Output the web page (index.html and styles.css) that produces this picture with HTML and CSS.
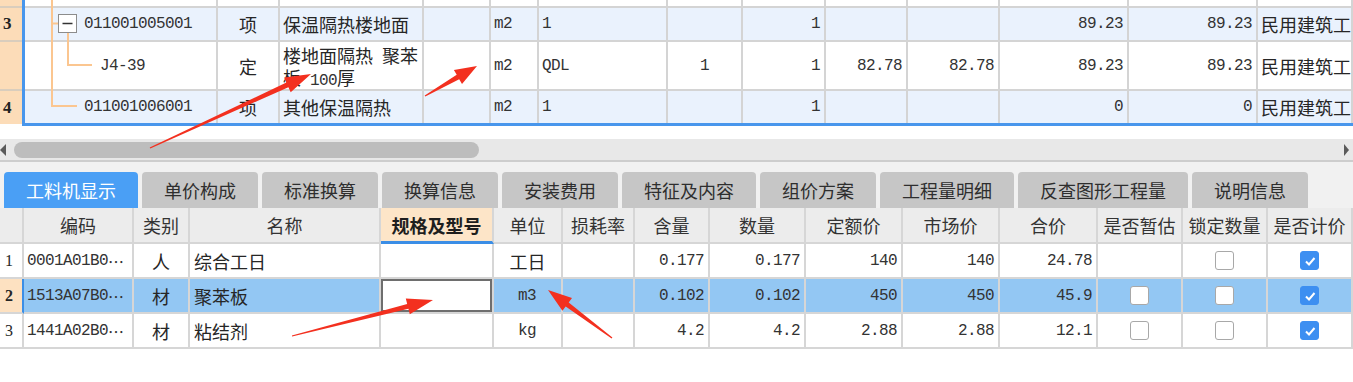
FILE: index.html
```html
<!DOCTYPE html>
<html lang="zh-CN">
  <head>
    <meta charset="UTF-8" />
    <title>工料机显示</title>
    <link rel="stylesheet" href="styles.css">
  </head>

  <body>
    <div class="page">
      <!-- upper grid: bill items -->
      <div class="top">
        <div class="rowheads">
          <div class="rh rh-cut"></div>
          <div class="rh rh-qd">3</div>
          <div class="rh rh-de"></div>
          <div class="rh rh-last">4</div>
        </div>
        <div class="frame">
          <div class="trow cut">
            <div class="cell"></div><div class="cell"></div><div class="cell"></div><div class="cell"></div>
            <div class="cell"></div><div class="cell"></div><div class="cell"></div><div class="cell"></div>
            <div class="cell"></div><div class="cell"></div><div class="cell"></div><div class="cell"></div>
            <div class="cell"></div>
          </div>
          <div class="trow qd">
            <div class="cell code m">011001005001</div>
            <div class="cell c">项</div>
            <div class="cell">保温隔热楼地面</div>
            <div class="cell"></div>
            <div class="cell m">m2</div>
            <div class="cell m">1</div>
            <div class="cell"></div>
            <div class="cell r m">1</div>
            <div class="cell"></div>
            <div class="cell"></div>
            <div class="cell r m">89.23</div>
            <div class="cell r m">89.23</div>
            <div class="cell">民用建筑工程</div>
          </div>
          <div class="trow de">
            <div class="cell code sub m">J4-39</div>
            <div class="cell c">定</div>
            <div class="cell wrap">楼地面隔热&ensp;聚苯<br>板&ensp;<span class="m">100</span>厚</div>
            <div class="cell"></div>
            <div class="cell m">m2</div>
            <div class="cell m">QDL</div>
            <div class="cell c m">1</div>
            <div class="cell r m">1</div>
            <div class="cell r m">82.78</div>
            <div class="cell r m">82.78</div>
            <div class="cell r m">89.23</div>
            <div class="cell r m">89.23</div>
            <div class="cell">民用建筑工程</div>
          </div>
          <div class="trow qd last">
            <div class="cell code m">011001006001</div>
            <div class="cell c">项</div>
            <div class="cell">其他保温隔热</div>
            <div class="cell"></div>
            <div class="cell m">m2</div>
            <div class="cell m">1</div>
            <div class="cell"></div>
            <div class="cell r m">1</div>
            <div class="cell"></div>
            <div class="cell"></div>
            <div class="cell r m">0</div>
            <div class="cell r m">0</div>
            <div class="cell">民用建筑工程</div>
          </div>

          <!-- tree lines over the code column -->
          <svg class="tree" width="120" height="123" viewBox="0 0 120 123">
            <g stroke="#fbc690" stroke-width="2" fill="none">
              <line x1="27" y1="0" x2="27" y2="107" />
              <line x1="27" y1="23.5" x2="33" y2="23.5" />
              <line x1="43" y1="33" x2="43" y2="66" />
              <line x1="43" y1="65" x2="67" y2="65" />
              <line x1="26" y1="106" x2="52" y2="106" />
            </g>
            <rect x="33.5" y="14.5" width="18" height="18" fill="#fff" stroke="#8c8c8c" />
            <line x1="37.5" y1="23.5" x2="47.5" y2="23.5" stroke="#333" stroke-width="1.5" />
          </svg>
        </div>
      </div>

      <div class="hscroll">
        <span class="arr arr-l"></span>
        <span class="thumb"></span>
        <span class="arr arr-r"></span>
      </div>

      <div class="tabs">
        <div class="tab active">工料机显示</div>
        <div class="tab">单价构成</div>
        <div class="tab">标准换算</div>
        <div class="tab">换算信息</div>
        <div class="tab">安装费用</div>
        <div class="tab">特征及内容</div>
        <div class="tab">组价方案</div>
        <div class="tab">工程量明细</div>
        <div class="tab">反查图形工程量</div>
        <div class="tab">说明信息</div>
      </div>

      <!-- lower grid: labour / material / machine -->
      <div class="grid">
        <div class="brow head">
          <div class="bc"></div>
          <div class="bc c">编码</div>
          <div class="bc c">类别</div>
          <div class="bc c">名称</div>
          <div class="bc c spec">规格及型号</div>
          <div class="bc c">单位</div>
          <div class="bc c">损耗率</div>
          <div class="bc c">含量</div>
          <div class="bc c">数量</div>
          <div class="bc c">定额价</div>
          <div class="bc c">市场价</div>
          <div class="bc c">合价</div>
          <div class="bc c">是否暂估</div>
          <div class="bc c">锁定数量</div>
          <div class="bc c">是否计价</div>
        </div>
        <div class="brow">
          <div class="bc no">1</div>
          <div class="bc m">0001A01B0<span class="dots">⋯</span></div>
          <div class="bc c">人</div>
          <div class="bc">综合工日</div>
          <div class="bc"></div>
          <div class="bc c">工日</div>
          <div class="bc"></div>
          <div class="bc r m">0.177</div>
          <div class="bc r m">0.177</div>
          <div class="bc r m">140</div>
          <div class="bc r m">140</div>
          <div class="bc r m">24.78</div>
          <div class="bc c"></div>
          <div class="bc c"><span class="cb"></span></div>
          <div class="bc c"><span class="cb on"><svg viewBox="0 0 14 14"><path d="M3 7.5 L6 10.5 L11.5 4" /></svg></span></div>
        </div>
        <div class="brow sel">
          <div class="bc no">2</div>
          <div class="bc m">1513A07B0<span class="dots">⋯</span></div>
          <div class="bc c">材</div>
          <div class="bc">聚苯板</div>
          <div class="bc edit"></div>
          <div class="bc c m">m3</div>
          <div class="bc"></div>
          <div class="bc r m">0.102</div>
          <div class="bc r m">0.102</div>
          <div class="bc r m">450</div>
          <div class="bc r m">450</div>
          <div class="bc r m">45.9</div>
          <div class="bc c"><span class="cb"></span></div>
          <div class="bc c"><span class="cb"></span></div>
          <div class="bc c"><span class="cb on"><svg viewBox="0 0 14 14"><path d="M3 7.5 L6 10.5 L11.5 4" /></svg></span></div>
        </div>
        <div class="brow">
          <div class="bc no">3</div>
          <div class="bc m">1441A02B0<span class="dots">⋯</span></div>
          <div class="bc c">材</div>
          <div class="bc">粘结剂</div>
          <div class="bc"></div>
          <div class="bc c m">kg</div>
          <div class="bc"></div>
          <div class="bc r m">4.2</div>
          <div class="bc r m">4.2</div>
          <div class="bc r m">2.88</div>
          <div class="bc r m">2.88</div>
          <div class="bc r m">12.1</div>
          <div class="bc c"><span class="cb"></span></div>
          <div class="bc c"><span class="cb"></span></div>
          <div class="bc c"><span class="cb on"><svg viewBox="0 0 14 14"><path d="M3 7.5 L6 10.5 L11.5 4" /></svg></span></div>
        </div>
      </div>

      <!-- red annotation arrows on top of the screenshot -->
      <svg class="marks" width="1353" height="382" viewBox="0 0 1353 382">
        <polygon points="150.3,148.5 288.4,87.2 290.7,92.2 311,74 284.1,77.6 286.4,82.6 149.7,147.5" />
        <polygon points="425.3,96.5 459.2,79.2 462,83.9 477,66 453.9,70.1 456.7,74.8 424.7,95.5" />
        <polygon points="292.1,336.6 408.4,308.8 409.8,314.2 433,300 405.8,298.6 407.2,304 291.9,335.4" />
        <polygon points="612.4,337.5 568.7,302.4 572,298 548,290 562.4,310.8 565.7,306.4 611.6,338.5" />
      </svg>
    </div>
  </body>
</html>
```

FILE: styles.css
```css
* {
  box-sizing: border-box;
}

body {
  margin: 0;
  background: #fff;
  font-family: "Noto Sans CJK SC", sans-serif;
  font-size: 18px;
  color: #262626;
}

.page {
  position: relative;
  width: 1353px;
  height: 382px;
  overflow: hidden;
}

/* upper grid */
.top {
  display: flex;
  height: 126px;
}

.rowheads {
  width: 22px;
  flex: none;
}

.rh {
  display: flex;
  align-items: center;
  padding-left: 3px;
  background: #fcdcb8;
  border-bottom: 2px solid #d9cdbd;
  font-family: "Liberation Serif", serif;
  font-weight: bold;
  font-size: 17px;
  color: #222;
}

.rh-cut { height: 8px; }
.rh-qd { height: 34px; }
.rh-de { height: 49px; }
.rh-last { height: 33px; border-bottom: none; }

.frame {
  flex: 1;
  position: relative;
  overflow: hidden;
  border-left: 3px solid #4896ec;
  border-bottom: 3px solid #4896ec;
}

.trow {
  display: grid;
  grid-template-columns: 193px 62px 144px 67px 48px 129px 75px 83px 82px 92px 129px 129px 95px;
}

.trow.cut { height: 8px; }
.trow.qd { height: 34px; background: #eaf2fd; }
.trow.de { height: 49px; }
.trow.last { height: 32px; }
.trow.last .cell { border-bottom: none; }

.cell {
  display: flex;
  align-items: center;
  padding: 0 3px;
  overflow: hidden;
  white-space: nowrap;
  border-right: 2px solid #d4d4d4;
  border-bottom: 2px solid #d4d4d4;
  line-height: 1;
}

.cell.code { padding-left: 59px; }
.cell.sub { padding-left: 75px; }
.cell.wrap {
  display: block;
  white-space: normal;
  line-height: 22px;
  padding-top: 2px;
}

.c { justify-content: center; }
.r { justify-content: flex-end; padding-right: 4px; }

.m {
  font-family: "Liberation Mono", monospace;
  font-size: 16px;
  letter-spacing: -0.6px;
  color: #333;
}

.tree {
  position: absolute;
  left: 0;
  top: 0;
}

/* horizontal scroll bar */
.hscroll {
  display: flex;
  align-items: center;
  margin-top: 13px;
  height: 23px;
  background: #e8e8e8;
  border-bottom: 2px solid #cdcdcd;
}

.arr {
  width: 0;
  height: 0;
  border-top: 6px solid transparent;
  border-bottom: 6px solid transparent;
}

.arr-l {
  border-right: 6px solid #5a5a5a;
}

.arr-r {
  margin-left: auto;
  margin-right: 4px;
  border-left: 5px solid #5a5a5a;
}

.thumb {
  margin-left: 8px;
  width: 465px;
  height: 16px;
  border-radius: 8px;
  background: #bdbdbd;
}

/* tabs */
.tabs {
  display: flex;
  gap: 4px;
  height: 46px;
  padding: 10px 0 0 4px;
  background: #f1f1f1;
}

.tab {
  display: flex;
  align-items: center;
  height: 36px;
  padding: 0 22px;
  border-radius: 4px 4px 0 0;
  background: #c6c6c6;
  color: #2e2e2e;
  line-height: 1;
}

.tab.active {
  background: #4a9ff5;
  color: #fff;
}

/* lower grid */
.brow {
  display: grid;
  grid-template-columns: 24px 110px 56px 191px 113px 69px 72px 75px 96px 97px 97px 98px 85px 85px 85px;
  height: 35px;
}

.brow.head {
  height: 36px;
  background: #ececec;
  color: #333;
}

.bc {
  display: flex;
  align-items: center;
  padding: 0 4px;
  overflow: hidden;
  white-space: nowrap;
  border-right: 2px solid #d6d6d6;
  border-bottom: 2px solid #d6d6d6;
  line-height: 1;
}

.bc.m {
  padding-left: 3px;
}

.bc.spec {
  background: #fde5c8;
  border-bottom: 3px solid #3b8ee6;
  font-weight: bold;
  color: #1e1e1e;
}

.bc.no {
  padding-left: 5px;
  font-family: "Liberation Serif", serif;
  font-size: 16px;
}

.dots {
  font-family: "Noto Sans CJK SC", sans-serif;
  letter-spacing: 0;
  font-size: 16px;
}

.brow.sel {
  background: #93c7f3;
}

.brow.sel .no {
  background: #fde1c1;
  font-weight: bold;
  border-right-color: #3b8ee6;
}

.bc.edit {
  background: #fff;
  box-shadow: inset 0 0 0 2px #6e6e6e;
}

.cb {
  display: flex;
  align-items: center;
  justify-content: center;
  width: 19px;
  height: 19px;
  border: 1.5px solid #a8a8a8;
  border-radius: 3px;
  background: #fff;
}

.cb.on {
  background: #3d8ff1;
  border-color: #3d8ff1;
}

.cb svg {
  width: 14px;
  height: 14px;
  fill: none;
  stroke: #fff;
  stroke-width: 2;
}

/* annotation arrows */
.marks {
  position: absolute;
  left: 0;
  top: 0;
  pointer-events: none;
  fill: #f3301f;
}
```
